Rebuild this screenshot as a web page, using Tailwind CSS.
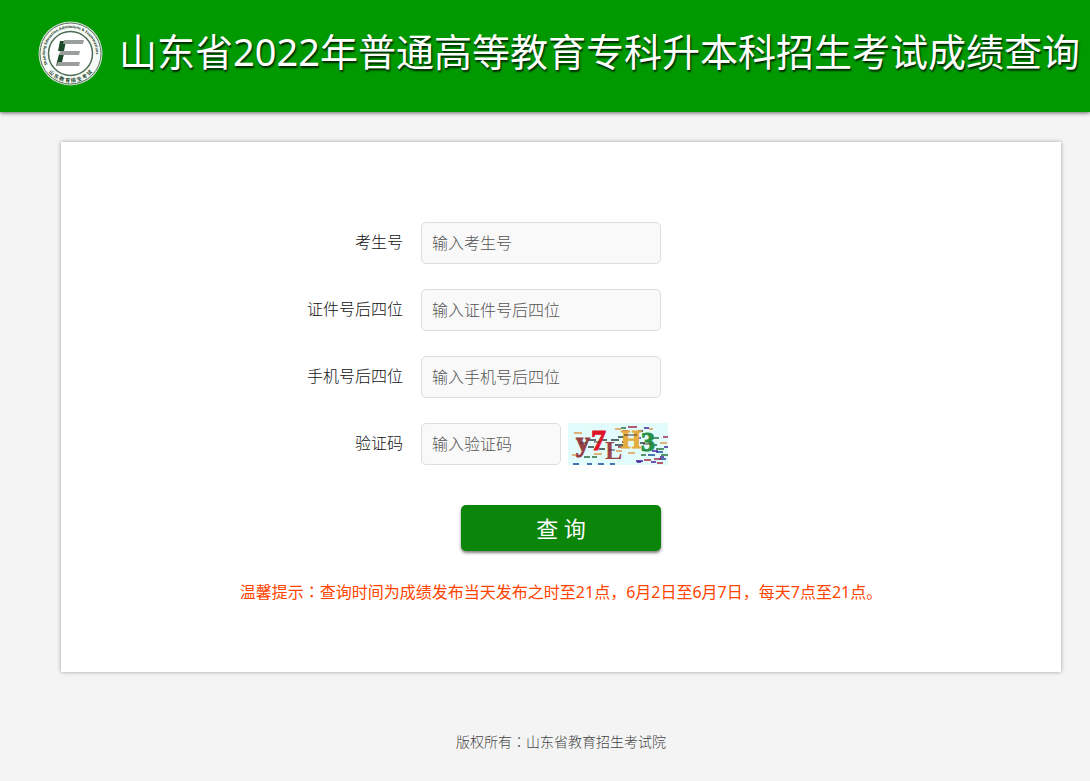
<!DOCTYPE html>
<html lang="zh-CN">
<head>
  <meta charset="UTF-8" />
  <meta name="viewport" content="width=device-width, initial-scale=1.0"/>
  <title>山东省2022年普通高等教育专科升本科招生考试成绩查询</title>
  <script src="https://cdn.jsdelivr.net/npm/@tailwindcss/browser@4"></script>
</head>
<body class="min-h-screen bg-[#f4f4f4] font-['Noto_Sans','Noto_Sans_CJK_SC',sans-serif] text-base font-light text-[#111]">
  <header class="flex h-28 items-start gap-4 bg-[#009900] pl-[38px] shadow-[0_1px_4px_rgba(0,0,0,0.6)]">
    <!-- Logo -->
    <svg class="mt-[21px] size-[65px] shrink-0" viewBox="0 0 65 65" role="img" aria-label="山东省教育招生考试院">
      <defs>
        <path id="arc-top" d="M9.5 43.5 A25.5 25.5 0 1 1 55.5 43.5" />
        <path id="arc-bottom" d="M6 44 A29 29 0 0 0 59 44" />
      </defs>
      <circle cx="32.5" cy="32.5" r="32" fill="#cfdccf" />
      <circle cx="32.5" cy="32.5" r="30.5" fill="#f6faf6" stroke="#5f7a64" stroke-width="1" />
      <circle cx="32.5" cy="32.5" r="22" fill="#fff" stroke="#4c6b53" stroke-width="1.5" />
      <text font-size="3.8" font-weight="bold" fill="#24442c"><textPath href="#arc-top">Shandong Education Admissions &amp; Examinations</textPath></text>
      <text font-size="5" font-weight="bold" fill="#24442c" text-anchor="middle"><textPath href="#arc-bottom" startOffset="50%">山 东 教 育 招 生 考 试</textPath></text>
      <path d="M22 20h6l-2 10h-6zM21 33h5l-3 12h-5z" fill="#1d4a28" />
      <path d="M26 19h20l-1 4H25zM22 30h20l-1 4H21zM20 41h22l-1 4H18z" fill="#9a9f9b" />
    </svg>
    <h1 class="pt-[23px] text-[38px] leading-[56px] font-normal whitespace-nowrap text-white text-shadow-[1px_2px_2px_rgba(0,0,0,0.8)]">山东省2022年普通高等教育专科升本科招生考试成绩查询</h1>
  </header>

  <div class="pt-[30px] pr-[29px] pl-[61px]">
    <main class="bg-white pt-20 pb-[66px] shadow-[0_0_4px_rgba(0,0,0,0.35)]">
      <form>
        <div class="space-y-[25px]">
          <div class="flex items-center">
            <label for="ksh" class="w-[36%] pr-[18px] pb-0.5 text-right">考生号</label>
            <input id="ksh" type="text" placeholder="输入考生号" class="h-[42px] w-60 rounded-[5px] border border-[#ddd] bg-[#f9f9f9] px-[10px] placeholder:text-[#555]" />
          </div>
          <div class="flex items-center">
            <label for="zjh" class="w-[36%] pr-[18px] pb-0.5 text-right">证件号后四位</label>
            <input id="zjh" type="text" placeholder="输入证件号后四位" class="h-[42px] w-60 rounded-[5px] border border-[#ddd] bg-[#f9f9f9] px-[10px] placeholder:text-[#555]" />
          </div>
          <div class="flex items-center">
            <label for="sjh" class="w-[36%] pr-[18px] pb-0.5 text-right">手机号后四位</label>
            <input id="sjh" type="text" placeholder="输入手机号后四位" class="h-[42px] w-60 rounded-[5px] border border-[#ddd] bg-[#f9f9f9] px-[10px] placeholder:text-[#555]" />
          </div>
          <div class="flex items-center">
            <label for="yzm" class="w-[36%] pr-[18px] pb-0.5 text-right">验证码</label>
            <input id="yzm" type="text" placeholder="输入验证码" class="h-[42px] w-[140px] rounded-[5px] border border-[#ddd] bg-[#f9f9f9] px-[10px] placeholder:text-[#555]" />
            <!-- Captcha -->
            <svg class="ml-[7px] h-[42px] w-[100px] font-['Liberation_Serif',serif] font-bold" viewBox="0 0 100 42" role="img" aria-label="验证码">
              <rect width="100" height="42" fill="#e2fbfb" />
              <g fill="none" stroke-width="1.5">
                <path d="M6 10h8M4 32h5M26 31h8M47 6h6M48 28h6M60 30h7M81 6h4M92 20h7" stroke="#e09a50" />
                <path d="M20 17h8M20 24h6M33 17h6M31 26h6M43 17h8M47 22h8M50 14h7M70 8h5M72 20h5" stroke="#2c3c3c" />
                <path d="M5 41h6M19 41h5M30 41h6M42 41h5M88 29h7M80 32h7M91 36h7M67 15h6" stroke="#164a9a" />
                <path d="M16 34h6M24 34h5M53 5h5M85 15h6M82 22h7M88 26h8M73 32h5M93 32h7" stroke="#28703c" />
                <path d="M54 8h6M60 4h9M50 24h5M86 36h7M76 37h7M89 40h6M95 14h5M54 19h4" stroke="#a02848" />
                <path d="M68 38h7M69 39h4M83 39h5M84 28h6M96 24h4M92 34h4M76 5h5" stroke="#46209a" />
              </g>
              <g stroke-width="1">
                <text x="8" y="28" font-size="28" fill="#963f44" stroke="#963f44">y</text>
                <text x="23" y="27" font-size="30" fill="#df1428" stroke="#df1428">7</text>
                <text x="37" y="36" font-size="26" fill="#a04448">L</text>
                <text x="53" y="25" font-size="26" fill="#e5ab3c" stroke="#e5ab3c">H</text>
                <text x="73" y="28" font-size="28" fill="#269044" stroke="#269044">3</text>
              </g>
              <path d="M12 20h7M26 19h6M41 27h6M56 12h13M75 21h8" stroke="#4a3434" stroke-width="1" />
            </svg>
          </div>
        </div>
        <button type="submit" class="mx-auto mt-10 block h-[46px] w-[200px] rounded-[5px] bg-[#0b860b] text-[22px] font-normal text-white shadow-[0_2px_3px_rgba(0,0,0,0.5)]">查 询</button>
      </form>
      <p class="mt-7 pb-0.5 text-center font-normal text-[#ff4400]">温馨提示<span class="font-['Noto_Sans_CJK_TC',sans-serif]" lang="zh-TW">：</span>查询时间为成绩发布当天发布之时至21点，6月2日至6月7日，每天7点至21点。</p>
    </main>
    <footer class="pt-[59px] text-center text-sm text-[#444]">版权所有<span class="font-['Noto_Sans_CJK_TC',sans-serif]" lang="zh-TW">：</span>山东省教育招生考试院</footer>
  </div>
</body>
</html>
